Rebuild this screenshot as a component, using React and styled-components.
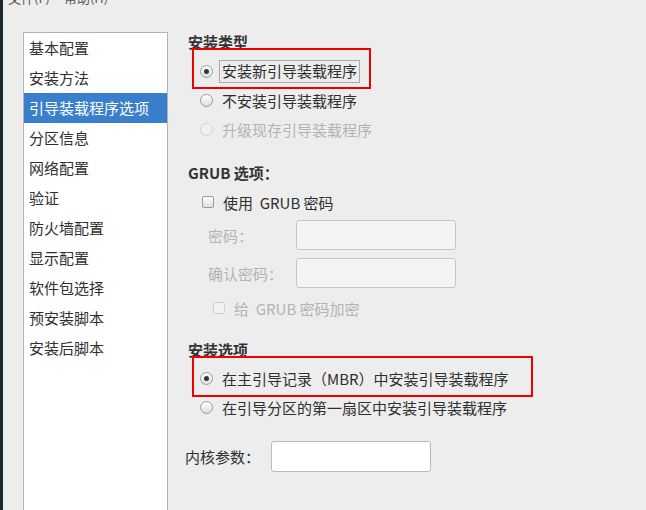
import React from 'react'
import styled, { createGlobalStyle } from 'styled-components'

const GlobalStyle = createGlobalStyle`
  html, body {
    margin: 0;
    padding: 0;
    background: #ededed;
    overflow: hidden;
  }
  * { box-sizing: border-box; }
`;

const Window = styled.div`
  display: flex;
  flex-direction: row;
  width: 646px;
  height: 510px;
  background: #ededed;
  color: #2f2f2f;
  font-family: "Noto Sans CJK SC", "DejaVu Sans", sans-serif;
  font-size: 15px;
`;

const Edge = styled.div`
  width: 3px;
  background: #18272c;
  flex-shrink: 0;
`;

const Main = styled.div`
  flex: 1;
  display: flex;
  flex-direction: column;
`;

const MenuBar = styled.div`
  height: 5px;
  overflow: hidden;
  display: flex;
  align-items: flex-end;
  gap: 14px;
  padding-left: 5px;
  font-size: 13px;
  line-height: 14px;
  color: #555;
`;

const MenuItem = styled.span`
  white-space: nowrap;
`;

const Body = styled.div`
  flex: 1;
  display: flex;
  flex-direction: row;
  padding: 27px 0 0 20px;
`;

const Sidebar = styled.div`
  width: 145px;
  flex-shrink: 0;
  background: #fff;
  border: 1px solid #b3b3b3;
  border-bottom: none;
  display: flex;
  flex-direction: column;
`;

const NavItem = styled.div`
  height: 30px;
  line-height: 30px;
  padding-left: 5px;
  white-space: nowrap;
  color: ${p => (p.$active ? '#fff' : '#2f2f2f')};
  background: ${p => (p.$active ? '#3a7fcb' : 'transparent')};
`;

const Panel = styled.div`
  flex: 1;
  display: flex;
  flex-direction: column;
  padding-left: 17px;
`;

const Heading = styled.div`
  height: 20px;
  line-height: 20px;
  margin-left: 3px;
  margin-top: ${p => p.$top || 0}px;
  font-weight: bold;
  color: #333;
`;

const Group = styled.div`
  display: flex;
  flex-direction: column;
  margin-top: ${p => p.$top || 0}px;
`;

const OptionRow = styled.div`
  position: relative;
  display: flex;
  align-items: center;
  height: ${p => p.$h ?? 29}px;
  margin-left: ${p => p.$indent ?? 15}px;
  margin-top: ${p => p.$top ?? 0}px;
  gap: 9px;
  color: ${p => (p.$disabled ? '#b3b3b3' : '#2f2f2f')};
  white-space: nowrap;
`;

const Radio = styled.span`
  position: relative;
  width: 13px;
  height: 13px;
  border-radius: 50%;
  flex-shrink: 0;
  border: 1px solid ${p => (p.$disabled ? '#d2d2d2' : '#9c9c9c')};
  background: ${p => (p.$disabled ? '#f1f1f1' : 'linear-gradient(#ffffff, #dedede)')};

  &::after {
    content: '';
    display: ${p => (p.$checked ? 'block' : 'none')};
    position: absolute;
    left: 3px;
    top: 3px;
    width: 5px;
    height: 5px;
    border-radius: 50%;
    background: #333;
  }
`;

const Checkbox = styled.span`
  width: 12px;
  height: 12px;
  border-radius: 2px;
  flex-shrink: 0;
  border: 1px solid ${p => (p.$disabled ? '#d0d0d0' : '#9c9c9c')};
  background: ${p => (p.$disabled ? '#f1f1f1' : 'linear-gradient(#ffffff, #dedede)')};
`;

const Focused = styled.span`
  border: 1px solid #a9a9a9;
  padding: 1px 2px 2px 2px;
  margin-left: -3px;
  line-height: 18px;
`;

const Marker = styled.div`
  position: absolute;
  left: -8px;
  top: ${p => p.$top}px;
  width: ${p => p.$w}px;
  height: 41px;
  border: 2px solid #f00000;
  pointer-events: none;
`;

const FieldRow = styled.div`
  display: flex;
  align-items: center;
  height: 30px;
  margin-left: ${p => p.$indent ?? 23}px;
  margin-top: ${p => p.$top ?? 0}px;
  color: ${p => (p.$disabled ? '#b3b3b3' : '#2f2f2f')};
`;

const FieldLabel = styled.span`
  width: ${p => p.$w}px;
  flex-shrink: 0;
  white-space: nowrap;
`;

const TextBox = styled.div`
  width: 160px;
  height: ${p => p.$h ?? 30}px;
  border-radius: 3px;
  border: 1px solid ${p => (p.$disabled ? '#c6c6c6' : '#bbbbbb')};
  background: ${p => (p.$disabled ? '#f3f3f3' : '#ffffff')};
`;

const navItems = [
  '基本配置',
  '安装方法',
  '引导装载程序选项',
  '分区信息',
  '网络配置',
  '验证',
  '防火墙配置',
  '显示配置',
  '软件包选择',
  '预安装脚本',
  '安装后脚本',
];

export default function App() {
  return (
    <>
      <GlobalStyle />
      <Window>
        <Edge />
        <Main>
          <MenuBar>
            <MenuItem>文件(F)</MenuItem>
            <MenuItem>帮助(H)</MenuItem>
          </MenuBar>
          <Body>
            <Sidebar>
              {navItems.map(item => (
                <NavItem key={item} $active={item === '引导装载程序选项'}>
                  {item}
                </NavItem>
              ))}
            </Sidebar>
            <Panel>
              <Heading>安装类型</Heading>
              <Group $top={5}>
                <OptionRow>
                  <Marker $top={-9} $w={179} />
                  <Radio $checked />
                  <Focused>安装新引导装载程序</Focused>
                </OptionRow>
                <OptionRow>
                  <Radio />
                  <span>不安装引导装载程序</span>
                </OptionRow>
                <OptionRow $disabled>
                  <Radio $disabled />
                  <span>升级现存引导装载程序</span>
                </OptionRow>
              </Group>

              <Heading $top={19}>GRUB 选项：</Heading>
              <OptionRow $h={30} $top={4} $indent={17}>
                <Checkbox />
                <span>使用&nbsp; GRUB 密码</span>
              </OptionRow>
              <FieldRow $disabled $top={3}>
                <FieldLabel $w={88}>密码：</FieldLabel>
                <TextBox $disabled />
              </FieldRow>
              <FieldRow $disabled $top={8}>
                <FieldLabel $w={88}>确认密码：</FieldLabel>
                <TextBox $disabled />
              </FieldRow>
              <OptionRow $h={30} $top={5} $indent={28} $disabled>
                <Checkbox $disabled />
                <span>给&nbsp; GRUB 密码加密</span>
              </OptionRow>

              <Heading $top={17}>安装选项</Heading>
              <Group $top={4}>
                <OptionRow>
                  <Marker $top={-8} $w={341} />
                  <Radio $checked />
                  <span>在主引导记录（MBR）中安装引导装载程序</span>
                </OptionRow>
                <OptionRow>
                  <Radio />
                  <span>在引导分区的第一扇区中安装引导装载程序</span>
                </OptionRow>
              </Group>

              <FieldRow $indent={0} $top={19}>
                <FieldLabel $w={86}>内核参数：</FieldLabel>
                <TextBox $h={31} />
              </FieldRow>
            </Panel>
          </Body>
        </Main>
      </Window>
    </>
  )
}
